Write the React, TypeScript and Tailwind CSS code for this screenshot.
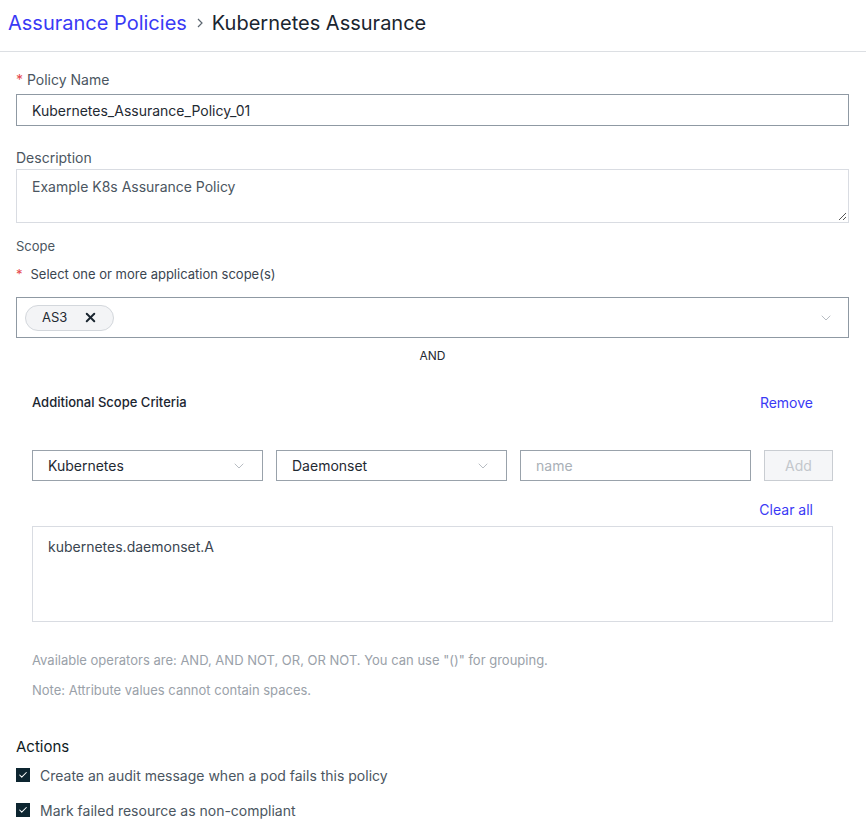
import { ChevronDown, X, Check } from "lucide-react";

const labelCls = "text-[14px] text-[#4b5661] leading-5";

function SelectBox({ value }: { value: string }) {
  return (
    <div className="flex h-[31px] flex-1 items-center justify-between border border-[#99a2ab] px-[15px]">
      <span className="text-[14px] text-[#1f2a33]">{value}</span>
      <ChevronDown className="h-4 w-4 text-[#a9b0b7]" strokeWidth={1.25} />
    </div>
  );
}

function CheckRow({ label }: { label: string }) {
  return (
    <div className="flex items-center gap-[10px]">
      <div className="flex h-[14px] w-[14px] items-center justify-center bg-[#0d2530]">
        <Check className="h-[10px] w-[10px] text-white" strokeWidth={2.5} />
      </div>
      <span className="text-[14px] text-[#4b5661]">{label}</span>
    </div>
  );
}

export default function App() {
  return (
    <div className="min-h-screen bg-white font-['Inter','Liberation_Sans',sans-serif]">
      <div className="flex h-[52px] items-center border-b border-[#dcdfe3] px-2 pb-[6px]">
        <span className="text-[20px] text-[#3a3af5]">Assurance Policies</span>
        <svg className="ml-[10px] mr-[9px]" width="6" height="10" viewBox="0 0 6 10" fill="none">
          <path d="M1 1 L5 5 L1 9" stroke="#5c6670" strokeWidth="1.2" />
        </svg>
        <span className="text-[20px] text-[#1a2530]">Kubernetes Assurance</span>
      </div>

      <div className="pl-4 pr-[17px] pt-[18px]">
        <div className={labelCls}>
          <span className="text-[#e5484d]">*</span> Policy Name
        </div>
        <div className="mt-[4px] flex h-[32px] items-center border border-[#8f99a3] px-[15px] text-[14px] text-[#1f2a33]">
          Kubernetes_Assurance_Policy_01
        </div>

        <div className={`${labelCls} mt-[22px]`}>Description</div>
        <div className="relative mt-[1px] h-[54px] border border-[#d9dce2] px-[15px] pt-[6px] text-[14px] text-[#4b5661]">
          Example K8s Assurance Policy
          <svg className="absolute bottom-[1px] right-[1px]" width="9" height="9" viewBox="0 0 9 9">
            <path d="M8 1 L1 8 M8 5 L5 8" stroke="#555" strokeWidth="1" />
          </svg>
        </div>

        <div className="mt-[13px] text-[13px] text-[#4b5661] leading-5">Scope</div>
        <div className="mt-[8px] text-[13px] text-[#3a4550] leading-5">
          <span className="text-[#e5484d]">*</span>
          <span className="ml-[8px]">Select one or more application scope(s)</span>
        </div>
        <div className="mt-[13px] flex h-[41px] items-center justify-between border border-[#8f99a3] pl-[8px] pr-[14px]">
          <div className="flex h-[26px] items-center gap-[16px] rounded-full border border-[#d3d7dc] bg-[#f3f4f6] pl-[16px] pr-[15px]">
            <span className="text-[13px] text-[#1f2a33]">AS3</span>
            <X className="h-[15px] w-[15px] text-[#1a2530]" strokeWidth={3.2} />
          </div>
          <ChevronDown className="h-4 w-4 text-[#a9b0b7]" strokeWidth={1.25} />
        </div>
        <div className="mt-[9px] text-center text-[12px] text-[#1f2a33]">AND</div>

        <div className="px-4">
          <div className="mt-[27px] flex items-center justify-between">
            <span className="text-[13px] font-medium text-[#1a2530]">Additional Scope Criteria</span>
            <span className="mr-[20px] text-[14px] text-[#3a3af5]">Remove</span>
          </div>

          <div className="mt-[37px] flex items-center gap-[13px]">
            <SelectBox value="Kubernetes" />
            <SelectBox value="Daemonset" />
            <div className="flex h-[31px] flex-1 items-center border border-[#99a2ab] px-[15px] text-[14px] text-[#a9b0b7]">
              name
            </div>
            <div className="flex h-[31px] w-[69px] items-center justify-center border border-[#c9cdd2] bg-[#f5f6f8] text-[14px] text-[#c3c7cc]">
              Add
            </div>
          </div>

          <div className="mt-[18px] flex justify-end">
            <span className="mr-[20px] text-[14px] text-[#3a3af5]">Clear all</span>
          </div>
          <div className="mt-[6px] h-[96px] border border-[#d9dce2] px-[15px] pt-[9px] text-[14px] text-[#3a4550]">
            kubernetes.daemonset.A
          </div>

          <div className="mt-[29px] text-[13px] text-[#9aa1a9]">
            Available operators are: AND, AND NOT, OR, OR NOT. You can use "()" for grouping.
          </div>
          <div className="mt-[10px] text-[13px] text-[#9aa1a9]">Note: Attribute values cannot contain spaces.</div>
        </div>

        <div className="mt-[36px] text-[15px] text-[#101c24]">Actions</div>
        <div className="mt-[6px] flex flex-col gap-[14px]">
          <CheckRow label="Create an audit message when a pod fails this policy" />
          <CheckRow label="Mark failed resource as non-compliant" />
        </div>
      </div>
    </div>
  );
}
